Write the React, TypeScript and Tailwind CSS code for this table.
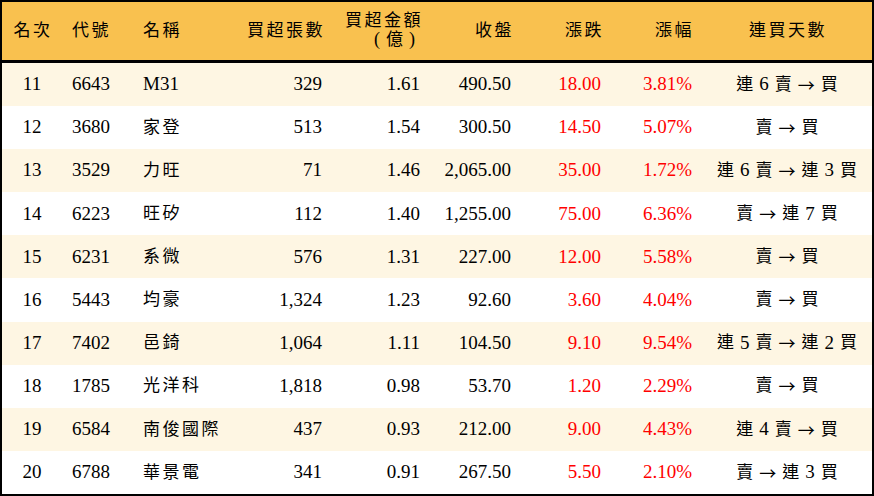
const rows = [
  { rank: 11, code: "6643", name: "M31", vol: "329", amt: "1.61", close: "490.50", chg: "18.00", pct: "3.81%", streak: "連 6 賣 → 買" },
  { rank: 12, code: "3680", name: "家登", vol: "513", amt: "1.54", close: "300.50", chg: "14.50", pct: "5.07%", streak: "賣 → 買" },
  { rank: 13, code: "3529", name: "力旺", vol: "71", amt: "1.46", close: "2,065.00", chg: "35.00", pct: "1.72%", streak: "連 6 賣 → 連 3 買" },
  { rank: 14, code: "6223", name: "旺矽", vol: "112", amt: "1.40", close: "1,255.00", chg: "75.00", pct: "6.36%", streak: "賣 → 連 7 買" },
  { rank: 15, code: "6231", name: "系微", vol: "576", amt: "1.31", close: "227.00", chg: "12.00", pct: "5.58%", streak: "賣 → 買" },
  { rank: 16, code: "5443", name: "均豪", vol: "1,324", amt: "1.23", close: "92.60", chg: "3.60", pct: "4.04%", streak: "賣 → 買" },
  { rank: 17, code: "7402", name: "邑錡", vol: "1,064", amt: "1.11", close: "104.50", chg: "9.10", pct: "9.54%", streak: "連 5 賣 → 連 2 買" },
  { rank: 18, code: "1785", name: "光洋科", vol: "1,818", amt: "0.98", close: "53.70", chg: "1.20", pct: "2.29%", streak: "賣 → 買" },
  { rank: 19, code: "6584", name: "南俊國際", vol: "437", amt: "0.93", close: "212.00", chg: "9.00", pct: "4.43%", streak: "連 4 賣 → 買" },
  { rank: 20, code: "6788", name: "華景電", vol: "341", amt: "0.91", close: "267.50", chg: "5.50", pct: "2.10%", streak: "賣 → 連 3 買" },
];

const cols = "grid grid-cols-[60px_70px_100px_100px_98px_91px_90px_91px_170px]";
const cjk = "text-[17px] tracking-[2.5px]";

function Streak({ text }: { text: string }) {
  return (
    <div className="flex items-center justify-center gap-[6px]">
      {text.split(" ").map((t, i) =>
        /\d/.test(t) ? (
          <span key={i}>{t}</span>
        ) : t === "→" ? (
          <span key={i} className="text-[17px]" style={{ fontFamily: '"Noto Sans CJK TC", sans-serif' }}>
            {t}
          </span>
        ) : (
          <span key={i} className="text-[17px]">
            {t}
          </span>
        ),
      )}
    </div>
  );
}

export default function App() {
  return (
    <div
      className="w-[874px] h-[496px] border-2 border-black bg-white text-[19px] text-black"
      style={{ fontFamily: '"Liberation Serif", "Noto Sans CJK TC", serif' }}
    >
      <div className={`${cols} h-[61px] items-center bg-[#f9c14f] border-b-[3px] border-black ${cjk}`}>
        <div className="text-center pl-[2px]">名次</div>
        <div className="pl-[10px]">代號</div>
        <div className="pl-[11px]">名稱</div>
        <div className="text-right pr-[7px]">買超張數</div>
        <div className="flex flex-col items-end pr-[7px] leading-[19px] -mt-[2px]">
          <span>買超金額</span>
          <span className="flex items-center gap-[6px] pr-[8px] tracking-normal">
            <span className="text-[18px]">(</span>
            <span>億</span>
            <span className="text-[18px]">)</span>
          </span>
        </div>
        <div className="text-right pr-[7px]">收盤</div>
        <div className="text-right pr-[7px]">漲跌</div>
        <div className="text-right pr-[8px]">漲幅</div>
        <div className="text-center pl-[2px]">連買天數</div>
      </div>
      {rows.map((r, i) => (
        <div
          key={r.rank}
          className={`${cols} h-[43.1px] items-center ${i % 2 === 0 ? "bg-[#fef6e3]" : "bg-white"}`}
        >
          <div className="text-center">{r.rank}</div>
          <div className="pl-[10px]">{r.code}</div>
          <div className={`pl-[11px] ${/^[A-Za-z0-9]+$/.test(r.name) ? "" : cjk}`}>{r.name}</div>
          <div className="text-right pr-[10px]">{r.vol}</div>
          <div className="text-right pr-[10px]">{r.amt}</div>
          <div className="text-right pr-[10px]">{r.close}</div>
          <div className="text-right pr-[10px] text-[#ff0000]">{r.chg}</div>
          <div className="text-right pr-[10px] text-[#ff0000]">{r.pct}</div>
          <Streak text={r.streak} />
        </div>
      ))}
    </div>
  );
}
